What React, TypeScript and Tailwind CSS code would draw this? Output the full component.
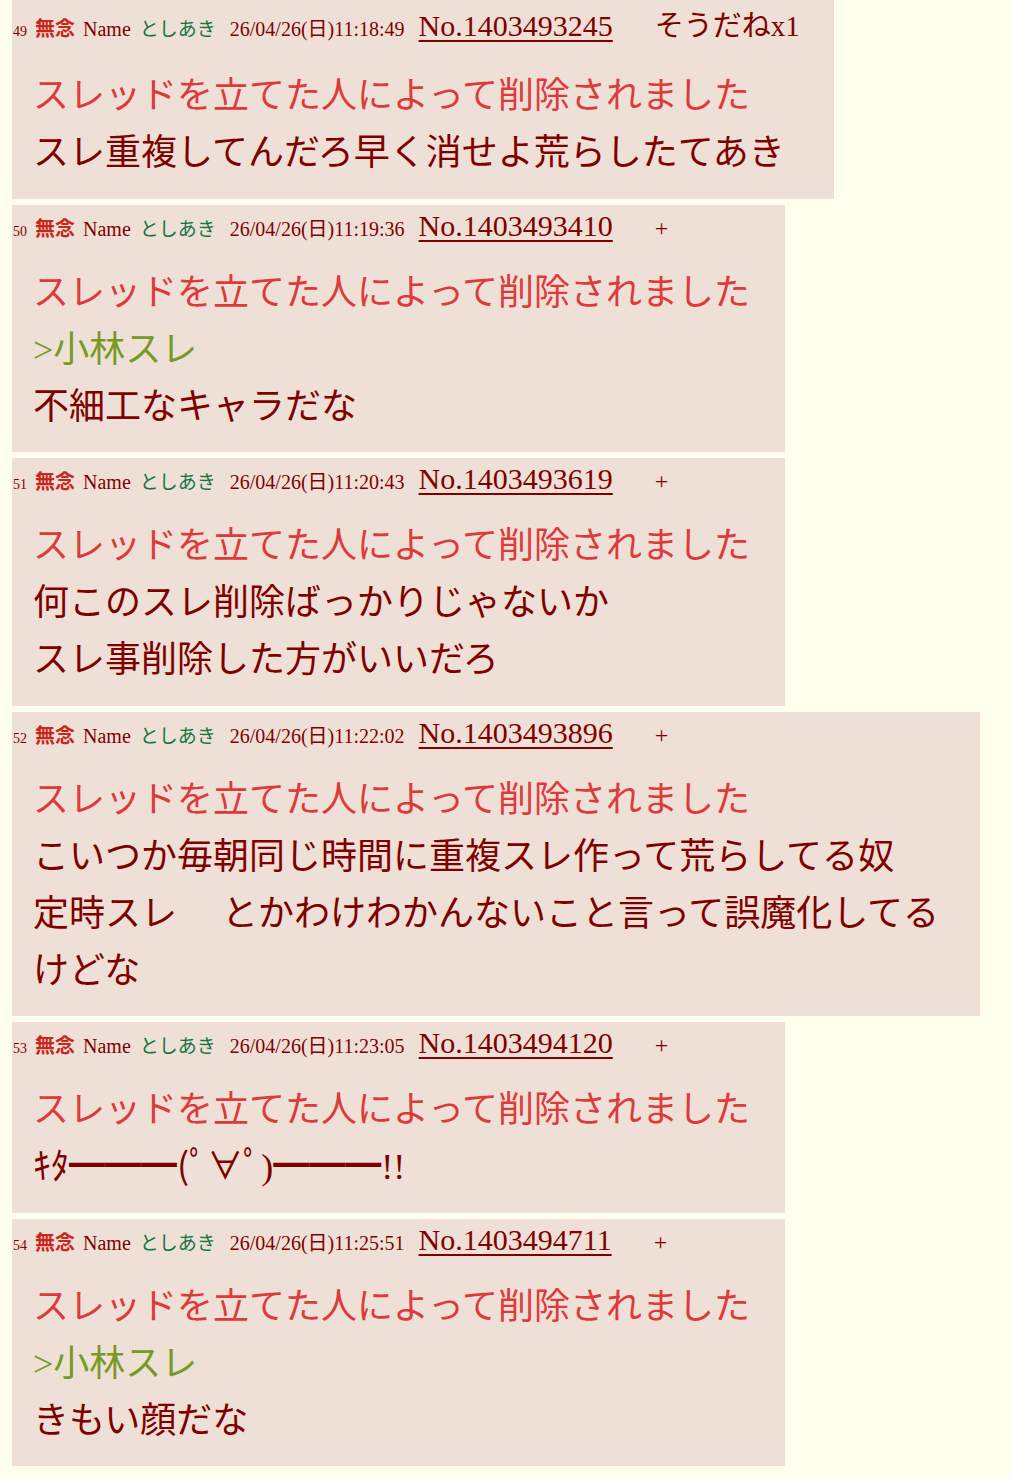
import React from 'react';

type Line = { text: string; kind?: 'del' | 'quote' | 'body' };

interface Post {
  no: number;
  date: string;
  id: string;
  sodane?: string;
  width: string;
  tall?: boolean;
  lines: Line[];
}

const SERIF = "font-['Liberation_Serif','Noto_Sans_CJK_JP',serif]";

const DEL = 'スレッドを立てた人によって削除されました';

// スレッドのレス一覧
const posts: Post[] = [
  {
    no: 49,
    date: '26/04/26(日)11:18:49',
    id: 'No.1403493245',
    sodane: 'そうだねx1',
    width: 'w-[822px]',
    tall: true,
    lines: [
      { text: DEL, kind: 'del' },
      { text: 'スレ重複してんだろ早く消せよ荒らしたてあき' },
    ],
  },
  {
    no: 50,
    date: '26/04/26(日)11:19:36',
    id: 'No.1403493410',
    width: 'w-[773px]',
    lines: [
      { text: DEL, kind: 'del' },
      { text: '>小林スレ', kind: 'quote' },
      { text: '不細工なキャラだな' },
    ],
  },
  {
    no: 51,
    date: '26/04/26(日)11:20:43',
    id: 'No.1403493619',
    width: 'w-[773px]',
    lines: [
      { text: DEL, kind: 'del' },
      { text: '何このスレ削除ばっかりじゃないか' },
      { text: 'スレ事削除した方がいいだろ' },
    ],
  },
  {
    no: 52,
    date: '26/04/26(日)11:22:02',
    id: 'No.1403493896',
    width: 'w-[968px]',
    lines: [
      { text: DEL, kind: 'del' },
      { text: 'こいつか毎朝同じ時間に重複スレ作って荒らしてる奴' },
      { text: '定時スレ　 とかわけわかんないこと言って誤魔化してる' },
      { text: 'けどな' },
    ],
  },
  {
    no: 53,
    date: '26/04/26(日)11:23:05',
    id: 'No.1403494120',
    width: 'w-[773px]',
    lines: [
      { text: DEL, kind: 'del' },
      { text: 'ｷﾀ━━━(ﾟ∀ﾟ)━━━!!' },
    ],
  },
  {
    no: 54,
    date: '26/04/26(日)11:25:51',
    id: 'No.1403494711',
    width: 'w-[773px]',
    lines: [
      { text: DEL, kind: 'del' },
      { text: '>小林スレ', kind: 'quote' },
      { text: 'きもい顔だな' },
    ],
  },
];

const lineColor = (kind?: string) => {
  if (kind === 'del') return 'text-[#dd3b3b]';
  if (kind === 'quote') return 'text-[#789922]';
  return 'text-[#800000]';
};

const PostBox: React.FC<{ post: Post }> = ({ post }) => (
  <div className={`${post.width} ml-[12px] bg-[#eee0d7] text-[#800000] pb-[16.5px]`}>
    {/* ヘッダー */}
    <div
      className={`flex items-baseline pl-[1px] ${post.tall ? 'h-[54px] pt-[11px]' : 'h-[46px] pt-[6px]'}`}
    >
      <span className="text-[14px] leading-none">{post.no}</span>
      <span className="ml-[8px] text-[20px] leading-none font-bold text-[#c8281c]">無念</span>
      <span className="ml-[8px] text-[20px] leading-none">Name</span>
      <span className="ml-[9px] text-[19px] leading-none text-[#117743]">としあき</span>
      <span className="ml-[14px] text-[20px] leading-none">{post.date}</span>
      <span className="ml-[14px] text-[30px] leading-none underline decoration-[2px] underline-offset-[4px]">
        {post.id}
      </span>
      {post.sodane ? (
        <span className="ml-[42px] text-[29px] leading-none">{post.sodane}</span>
      ) : (
        <span className="ml-[42px] text-[24px] leading-none">+</span>
      )}
    </div>

    {/* 本文 */}
    <div className="ml-[21px] mt-[14px] text-[36px] leading-[57px]">
      {post.lines.map((l, i) => (
        <div key={i} className={`whitespace-pre ${lineColor(l.kind)}`}>
          {l.text}
        </div>
      ))}
    </div>
  </div>
);

export default function App() {
  return (
    <div className={`min-h-[1480px] bg-[#ffffee] ${SERIF} flex flex-col gap-[6px]`}>
      {posts.map((p) => (
        <PostBox key={p.no} post={p} />
      ))}
    </div>
  );
}
